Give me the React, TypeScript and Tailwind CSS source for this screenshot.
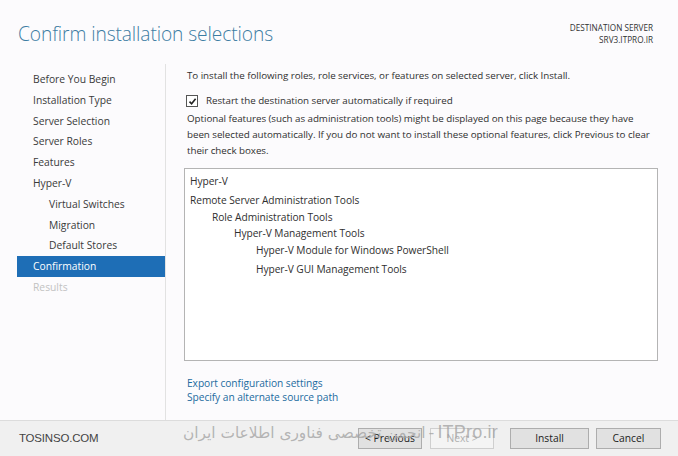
import React from "react";

const navItems: { label: string; indent?: boolean; active?: boolean; disabled?: boolean }[] = [
  { label: "Before You Begin" },
  { label: "Installation Type" },
  { label: "Server Selection" },
  { label: "Server Roles" },
  { label: "Features" },
  { label: "Hyper-V" },
  { label: "Virtual Switches", indent: true },
  { label: "Migration", indent: true },
  { label: "Default Stores", indent: true },
  { label: "Confirmation", active: true },
  { label: "Results", disabled: true },
];

const treeItems: { label: string; level: number }[] = [
  { label: "Hyper-V", level: 0 },
  { label: "Remote Server Administration Tools", level: 0 },
  { label: "Role Administration Tools", level: 1 },
  { label: "Hyper-V Management Tools", level: 2 },
  { label: "Hyper-V Module for Windows PowerShell", level: 3 },
  { label: "Hyper-V GUI Management Tools", level: 3 },
];

const levelPad = ["pl-[5px]", "pl-[27px]", "pl-[49px]", "pl-[71px]"];

export default function App() {
  return (
    <div
      className="w-[678px] h-[456px] bg-[#fcfbfd] text-[#2b2b2b] flex flex-col overflow-hidden relative"
      style={{ fontFamily: '"Open Sans", "Noto Sans", sans-serif' }}
    >
      {/* Header */}
      <div className="h-[64px] shrink-0 flex justify-between pl-[18px] pr-[25px]">
        <div className="pt-[19px] text-[19.2px] font-light text-[#3c7da3] leading-[30px] tracking-[-0.1px]">
          Confirm installation selections
        </div>
        <div className="pt-[22px] text-right text-[8.2px] leading-[12px] text-[#333]">
          <div>DESTINATION SERVER</div>
          <div>SRV3.ITPRO.IR</div>
        </div>
      </div>

      {/* Body */}
      <div className="flex flex-1 min-h-0">
        {/* Nav */}
        <div className="w-[149px] shrink-0 ml-[17px] pt-[5px] border-r border-[#e2e2e2] text-[10.3px]">
          {navItems.map((it) => (
            <div
              key={it.label}
              className={
                "h-[20.8px] leading-[20.8px] " +
                (it.indent ? "pl-[32px] " : "pl-[16px] ") +
                (it.active
                  ? "bg-[#1e6eb6] text-white"
                  : it.disabled
                  ? "text-[#c2c2c2]"
                  : "text-[#3a3a3a]")
              }
            >
              {it.label}
            </div>
          ))}
        </div>

        {/* Content */}
        <div className="flex-1 min-w-0 pl-[20px] pr-[18px] pt-[4px] text-[9.8px] tracking-[-0.05px] text-[#2f2f2f] flex flex-col">
          <div className="leading-[16px] pl-[1px] whitespace-nowrap">
            To install the following roles, role services, or features on selected server, click Install.
          </div>
          <div className="flex items-center mt-[10px] h-[14px]">
            <div className="w-[12px] h-[12px] border border-[#555] bg-white flex items-center justify-center">
              <svg width="9" height="9" viewBox="0 0 9 9">
                <path d="M1.5 4.6 L3.6 6.8 L7.6 1.8" stroke="#222" strokeWidth="1.6" fill="none" />
              </svg>
            </div>
            <span className="ml-[8px]">Restart the destination server automatically if required</span>
          </div>
          <div className="mt-[3px] leading-[16px] pl-[1px] whitespace-nowrap">
            Optional features (such as administration tools) might be displayed on this page because they have
            <br />
            been selected automatically. If you do not want to install these optional features, click Previous to clear
            <br />
            their check boxes.
          </div>
          <div className="mt-[9px] h-[193px] border border-[#b4b4b4] bg-white pt-[4px] w-[474px] -ml-[2px] text-[10.2px]">
            {treeItems.map((t, i) => (
              <div
                key={i}
                className={
                  levelPad[t.level] +
                  " " +
                  (i === 0 ? "h-[19px] leading-[16px]" : i === 4 ? "h-[19px] leading-[16px]" : "h-[16.5px] leading-[16px]")
                }
              >
                {t.label}
              </div>
            ))}
          </div>
          <div className="mt-[15px] text-[#1c6ba0] leading-[14px] pl-[1px] text-[10.2px]">
            <div>Export configuration settings</div>
            <div>Specify an alternate source path</div>
          </div>
        </div>
      </div>

      {/* Footer */}
      <div className="h-[36px] shrink-0 border-t border-[#dcdcdc] bg-[#f0f0f0] flex items-center pl-[18px] pr-[17px] relative">
        <div
          className="text-[11.5px] text-[#444] tracking-[-0.2px] pl-[1px]"
          style={{ fontFamily: '"Liberation Sans", Arial, sans-serif' }}
        >
          TOSINSO.COM
        </div>
        <div className="flex-1" />
        <div className="flex items-center text-[10.3px]">
          <div className="w-[64px] h-[21px] border border-[#adadad] bg-[#e1e1e1] flex items-center justify-center text-[#222]">
            &lt; Previous
          </div>
          <div className="ml-[8px] w-[64px] h-[21px] border border-[#cfcfcf] bg-[#f4f4f4] flex items-center justify-center text-[#b0b0b0]">
            Next &gt;
          </div>
          <div className="ml-[16px] w-[79px] h-[21px] border border-[#adadad] bg-[#e1e1e1] flex items-center justify-center text-[#222]">
            Install
          </div>
          <div className="ml-[7px] w-[65px] h-[21px] border border-[#adadad] bg-[#e1e1e1] flex items-center justify-center text-[#222]">
            Cancel
          </div>
        </div>

        {/* Watermark overlay */}
        <div
          dir="rtl"
          className="absolute left-[170px] top-[1px] w-[328px] flex items-baseline justify-start pointer-events-none whitespace-nowrap leading-[20px]"
          style={{ fontFamily: '"DejaVu Sans", sans-serif' }}
        >
          <span className="text-[18px] tracking-[0.2px] text-[#a4a4a4]/80" style={{ fontFamily: '"Liberation Sans", sans-serif' }}>
            ITPro.ir
          </span>
          <span className="text-[16px] mx-[3px] text-[#a4a4a4]/80">-</span>
          <span className="text-[15.4px] text-[#a4a4a4]/80">انجمن تخصصی فناوری اطلاعات ایران</span>
        </div>
      </div>
    </div>
  );
}
